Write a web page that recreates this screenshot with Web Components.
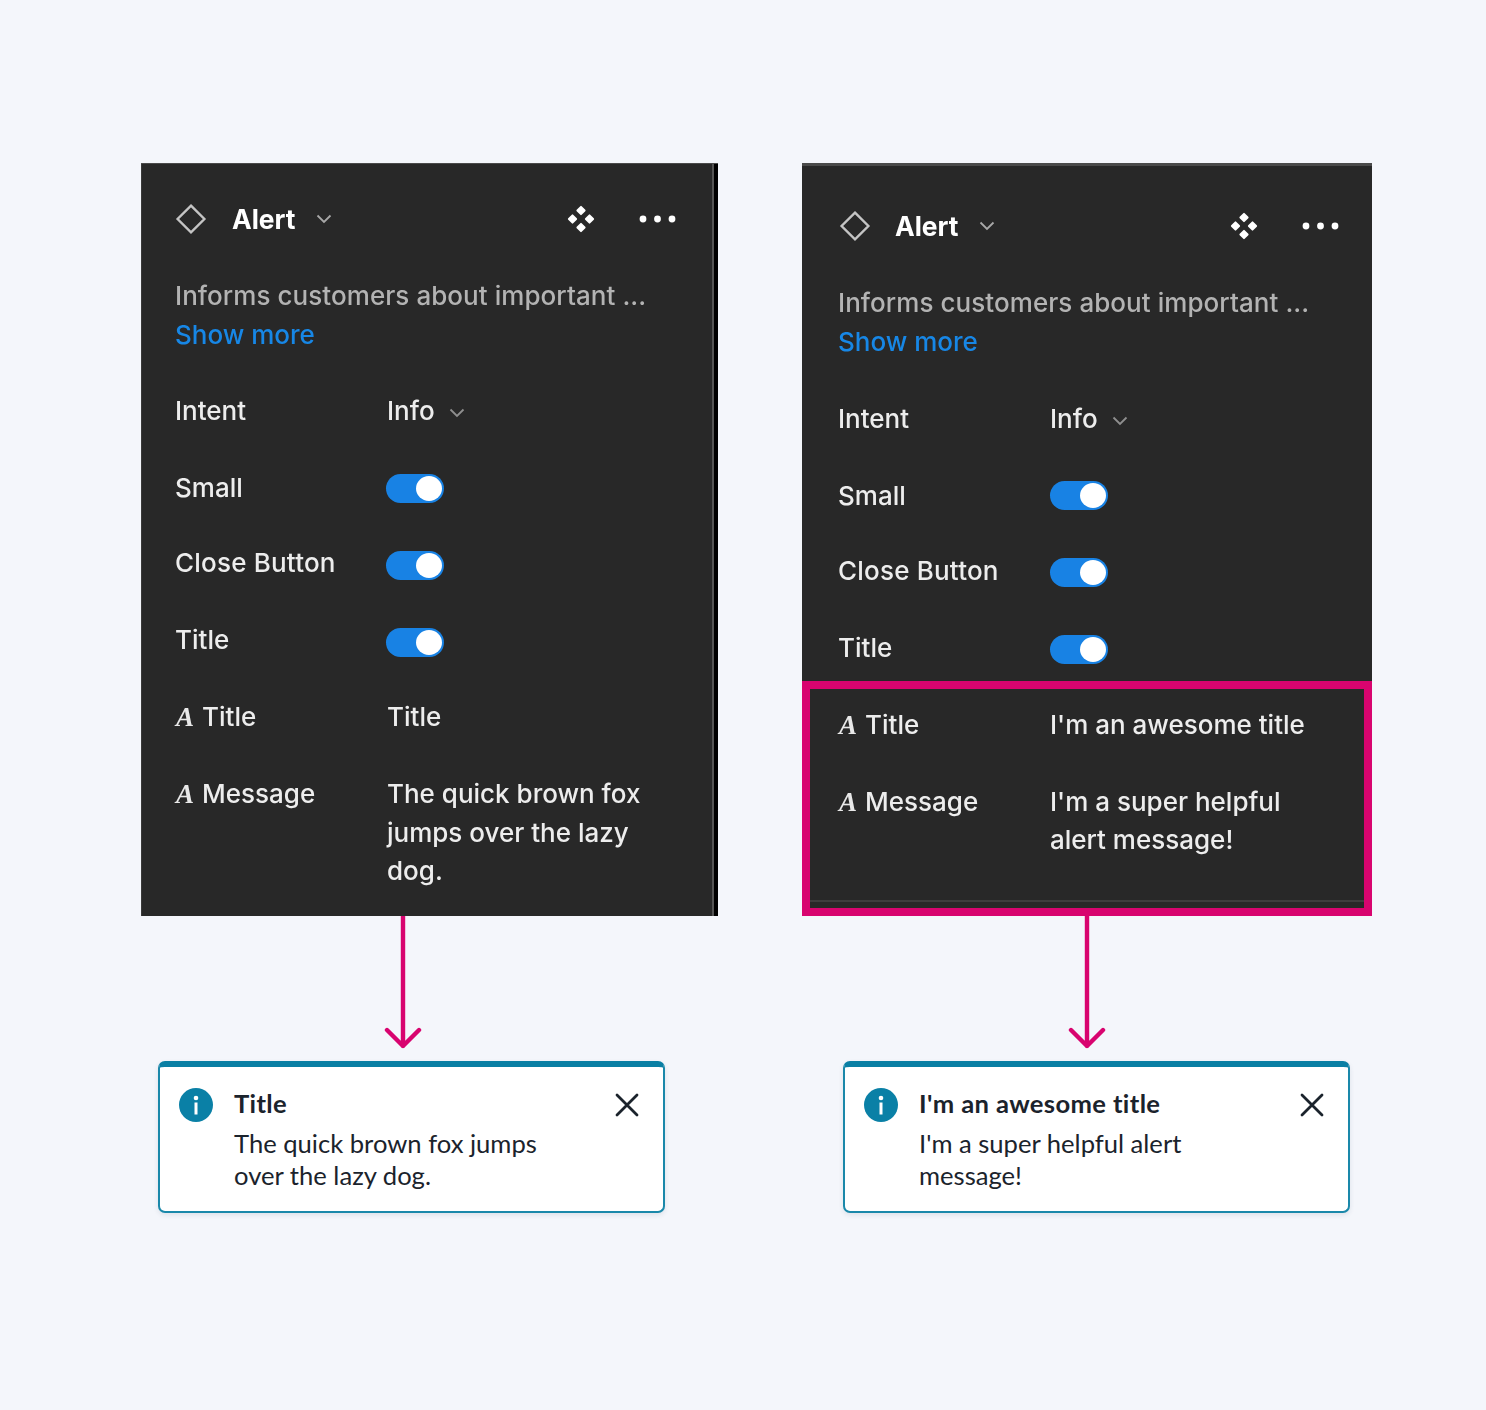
<!DOCTYPE html>
<html lang="en">
<head>
<meta charset="utf-8">
<title>Alert props</title>
<style>
html,body{margin:0;padding:0;background:#f4f6fb}
body{width:1486px;height:1410px;overflow:hidden;font-family:Inter,"Liberation Sans",sans-serif}
</style>
</head>
<body>
<template id="t-stage"><style>
:host{display:grid;grid-template-columns:577px 570px;column-gap:84px;padding:163px 0 0 141px;box-sizing:border-box;height:1410px;align-content:start}
</style><slot></slot></template>

<template id="t-col"><style>
:host{display:flex;flex-direction:column;align-items:flex-start}
::slotted(props-panel){align-self:stretch}
</style><slot></slot></template>

<template id="t-panel"><style>
:host{display:flex;flex-direction:column;box-sizing:border-box;height:753px;background:#282828;color:#e6e6e6;font:450 26px/38.5px Inter,"Liberation Sans",sans-serif;filter:blur(.5px);border-top:var(--top,1px) solid #4a4a4a}
.inner{flex:1;min-height:0;display:flex;flex-direction:column;padding:var(--pt,27px) 0 0 var(--pl,33px);border-left:var(--bl,1px) solid #3a3a3a;border-right:var(--br,0) solid #555}
.inner>*{flex:none}
:host([edge]) .inner{margin-right:4px}
:host([edge]){background:linear-gradient(90deg,#282828 573px,#000 573px)}
.head{display:flex;align-items:center;height:56px;padding-right:var(--pr,35px)}
.dia{margin-left:var(--dx,0px)}
.name{font-weight:700;color:#fff;margin-left:calc(25px - var(--dx,0px));font-size:26.400px}
.caret{margin-left:20px}
.sp{flex:1}
.move{margin-right:44px}
.desc{margin-top:30px;color:#b3b3b3;white-space:nowrap;letter-spacing:.06px}
.more{color:#1787e6;letter-spacing:0}
.rows{margin-top:var(--rm,38px);display:block}
</style>
<div class="inner">
<div class="head">
<svg class="dia" width="32" height="32" viewBox="0 0 32 32"><path d="M16 2.600 29.400 16 16 29.400 2.600 16Z" fill="none" stroke="#c4c4c4" stroke-width="2.400"/></svg>
<span class="name">Alert</span>
<svg class="caret" width="16" height="10" viewBox="0 0 16 10"><path d="M1.5 1.5 8 8l6.5-6.5" fill="none" stroke="#a8a8a8" stroke-width="1.8"/></svg>
<span class="sp"></span>
<svg class="move" width="28" height="28" viewBox="0 0 28 28" fill="#fff" stroke="#fff" stroke-width="2" stroke-linejoin="round"><path d="M14 1.900l3.600 3.600-3.600 3.600-3.600-3.600zM14 18.900l3.600 3.600-3.600 3.600-3.600-3.600zM5.500 10.400l3.600 3.600-3.600 3.600-3.600-3.600zM22.500 10.400l3.600 3.600-3.600 3.600-3.600-3.600z"/></svg>
<svg width="38" height="8" viewBox="0 0 38 8" fill="#fff"><circle cx="4" cy="4" r="3.4"/><circle cx="18.500" cy="4" r="3.4"/><circle cx="33" cy="4" r="3.4"/></svg>
</div>
<div class="desc">Informs customers about important ...<br><span class="more">Show more</span></div>
<div class="rows"><slot></slot></div>
</div>
</template>

<template id="t-row"><style>
:host{display:grid;grid-template-columns:212px 1fr;padding-bottom:38.500px;color:#ededed}
.v{padding-right:30px}
.k,.v{min-height:38.500px;display:block}
</style><div class="k"><slot name="key"></slot></div><div class="v"><slot></slot></div></template>

<template id="t-letter"><style>
:host{display:inline-block;width:27px;font:italic 700 27px/1 "Liberation Serif",serif;color:#e8e8e8;text-indent:1px}
</style>A</template>

<template id="t-caret"><style>
:host{display:inline-block;margin-left:14px;vertical-align:2px}
svg{display:block}
</style><svg width="16" height="10" viewBox="0 0 16 10"><path d="M1.5 1.5 8 8l6.5-6.5" fill="none" stroke="#8f8f8f" stroke-width="1.8"/></svg></template>

<template id="t-toggle"><style>
:host{display:block;box-sizing:border-box;width:58px;height:29px;margin:var(--ty,5px) 0 0 var(--tx,0px);border-radius:15px;background:#1882e4;padding:2px 1px 2px 30px}
:host([low]){margin-top:calc(var(--ty,5px) + 2px)}
i{display:block;width:26px;height:25px;border-radius:50%;background:#fff}
</style><i></i></template>

<template id="t-focus"><style>
:host{display:block;box-sizing:border-box;height:235px;margin:0 0 0 -36px;border:8px solid #d8046f;padding:16.500px 0 0 28px;position:relative;align-self:stretch}
hr{position:absolute;left:0;right:0;bottom:6px;margin:0;border:0;height:2px;background:#3d3d3d}
</style><slot></slot><hr></template>

<template id="t-arrow"><style>
:host{display:block;height:145px;margin-left:var(--x)}
svg{display:block}
</style><svg width="40" height="136" viewBox="0 0 40 136"><path d="M20 0V130M4 114 20 130 36 114" fill="none" stroke="#d8046f" stroke-width="4.400" stroke-linecap="round" stroke-linejoin="round"/></svg></template>

<template id="t-alert"><style>
:host{display:grid;grid-template-columns:37px 1fr 24px;column-gap:18px;box-sizing:border-box;width:507px;height:152px;margin-left:var(--x);background:#fff;border:2px solid #1a88aa;border-top:6px solid #0a7fa4;border-radius:7px;padding:20px 24px 0 19px;color:#1b232c;font:400 25.600px/32px Lato,"Open Sans",sans-serif;box-shadow:0 2px 5px rgba(30,50,80,.1)}
.ic{display:block;margin-top:1px}
h3{margin:0 0 8px;font-size:25.600px;line-height:32px;font-weight:700;letter-spacing:.37px}
p{margin:0}
.x{display:block;margin-top:6px}
</style>
<svg class="ic" width="34" height="34" viewBox="0 0 34 34"><circle cx="17" cy="17" r="17" fill="#0a80a6"/><circle cx="17" cy="10" r="2.300" fill="#fff"/><rect x="15.500" y="14.500" width="3" height="12" fill="#fff"/></svg>
<div><h3><slot name="title"></slot></h3><p><slot></slot></p></div>
<svg class="x" width="24" height="24" viewBox="0 0 24 24"><path d="M2 2 22 22M22 2 2 22" fill="none" stroke="#1b232c" stroke-width="2.800" stroke-linecap="round"/></svg>
</template>

<script>
const tags={'alert-stage':'t-stage','alert-column':'t-col','props-panel':'t-panel','prop-row':'t-row','letter-icon':'t-letter','caret-icon':'t-caret','toggle-on':'t-toggle','focus-box':'t-focus','down-arrow':'t-arrow','alert-card':'t-alert'};
for(const [tag,id] of Object.entries(tags)){
  customElements.define(tag,class extends HTMLElement{
    constructor(){super();this.attachShadow({mode:'open'}).appendChild(document.getElementById(id).content.cloneNode(true));}
  });
}
</script>

<alert-stage>
  <alert-column>
    <props-panel edge style="--br:2px;--tx:-1px">
      <prop-row><span slot="key">Intent</span>Info<caret-icon></caret-icon></prop-row>
      <prop-row style="padding-bottom:36.500px"><span slot="key">Small</span><toggle-on></toggle-on></prop-row>
      <prop-row><span slot="key" style="letter-spacing:.2px">Close Button</span><toggle-on low></toggle-on></prop-row>
      <prop-row><span slot="key">Title</span><toggle-on low></toggle-on></prop-row>
      <prop-row><span slot="key"><letter-icon></letter-icon>Title</span>Title</prop-row>
      <prop-row style="padding-bottom:0"><span slot="key"><letter-icon></letter-icon>Message</span>The quick brown fox jumps over the lazy dog.</prop-row>
    </props-panel>
    <down-arrow style="--x:242px"></down-arrow>
    <alert-card style="--x:17px"><span slot="title">Title</span>The quick brown fox jumps<br>over the lazy dog.</alert-card>
  </alert-column>
  <alert-column>
    <props-panel style="--top:3px;--pt:32px;--pl:36px;--pr:32px;--bl:0;--rm:39px;--dx:1px;--ty:4px">
      <prop-row><span slot="key">Intent</span>Info<caret-icon></caret-icon></prop-row>
      <prop-row style="padding-bottom:36.500px"><span slot="key">Small</span><toggle-on></toggle-on></prop-row>
      <prop-row><span slot="key" style="letter-spacing:.2px">Close Button</span><toggle-on low></toggle-on></prop-row>
      <prop-row style="padding-bottom:13.500px"><span slot="key">Title</span><toggle-on low></toggle-on></prop-row>
      <focus-box>
        <prop-row><span slot="key"><letter-icon></letter-icon>Title</span>I'm an awesome title</prop-row>
        <prop-row style="padding-bottom:0"><span slot="key"><letter-icon></letter-icon>Message</span>I'm a super helpful<br>alert message!</prop-row>
      </focus-box>
    </props-panel>
    <down-arrow style="--x:265px"></down-arrow>
    <alert-card style="--x:41px"><span slot="title">I'm an awesome title</span>I'm a super helpful alert<br>message!</alert-card>
  </alert-column>
</alert-stage>
</body>
</html>
